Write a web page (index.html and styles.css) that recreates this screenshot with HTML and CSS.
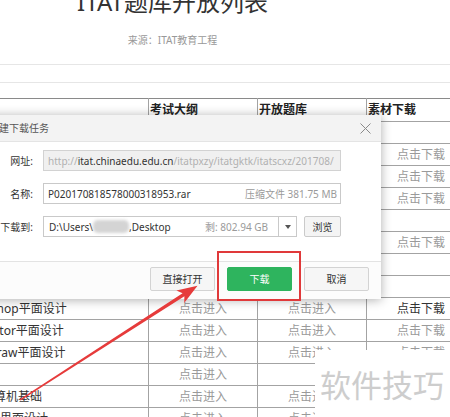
FILE: index.html
```html
<!DOCTYPE html>
<html lang="zh-CN">
<head>
<meta charset="utf-8">
<title>ITAT题库开放列表</title>
<link rel="stylesheet" href="styles.css">
</head>
<body>
<div class="viewport">
  <div class="page">
    <h1 class="title">ITAT题库开放列表</h1>
    <p class="source">来源：ITAT教育工程</p>
    <div class="sharebar"></div>
    <table class="list">
      <colgroup><col class="c1"><col class="c2"><col class="c3"><col class="c4"></colgroup>
      <thead>
        <tr><th></th><th>考试大纲</th><th>开放题库</th><th>素材下载</th></tr>
      </thead>
      <tbody>
        <tr><td class="name">ITAT平台认证</td><td>点击进入</td><td>点击进入</td><td></td></tr>
        <tr><td class="name">Flash动画设计</td><td>点击进入</td><td>点击进入</td><td>点击下载</td></tr>
        <tr><td class="name">Dreamweaver网页设计</td><td>点击进入</td><td>点击进入</td><td>点击下载</td></tr>
        <tr><td class="name">Fireworks网页设计</td><td>点击进入</td><td>点击进入</td><td>点击下载</td></tr>
        <tr><td class="name">Office办公应用</td><td>点击进入</td><td>点击进入</td><td></td></tr>
        <tr><td class="name">3ds Max三维设计</td><td>点击进入</td><td>点击进入</td><td>点击下载</td></tr>
        <tr><td class="name">AutoCAD工程制图</td><td>点击进入</td><td>点击进入</td><td></td></tr>
        <tr><td class="name">Java程序设计</td><td>点击进入</td><td>点击进入</td><td></td></tr>
        <tr><td class="name">Photoshop平面设计</td><td>点击进入</td><td>点击进入</td><td class="dark">点击下载</td></tr>
        <tr><td class="name">Illustrator平面设计</td><td>点击进入</td><td>点击进入</td><td>点击下载</td></tr>
        <tr><td class="name">CorelDraw平面设计</td><td>点击进入</td><td>点击进入</td><td>点击下载</td></tr>
        <tr><td class="name"></td><td>点击进入</td><td></td><td></td></tr>
        <tr><td class="name">计算机基础</td><td>点击进入</td><td>点击进入</td><td>点击下载</td></tr>
        <tr><td class="name">网页界面设计</td><td>点击进入</td><td>点击进入</td><td>点击下载</td></tr>
      </tbody>
    </table>
  </div>

  <div class="dialog">
    <div class="dlg-head">
      <span class="dlg-title">新建下载任务</span>
      <svg class="close" width="11" height="11" viewBox="0 0 11 11"><path d="M0.5 0.5 L10.5 10.5 M10.5 0.5 L0.5 10.5" stroke="#8a8a8a" stroke-width="1" fill="none"/></svg>
    </div>
    <div class="dlg-body">
      <label class="lbl">网址:</label>
      <div class="field disabled"><span>http://</span><span class="host">itat.chinaedu.edu.cn</span><span>/itatpxzy/itatgktk/itatscxz/201708/</span></div>
      <label class="lbl">名称:</label>
      <div class="field"><span>P020170818578000318953.rar</span><span class="meta">压缩文件 381.75 MB</span></div>
      <label class="lbl">下载到:</label>
      <div class="path-row">
        <div class="combo">
          <div class="path"><span>D:\Users\</span><span class="blur"></span><span>,Desktop</span><span class="meta">剩: 802.94 GB</span></div>
          <div class="drop"><span class="caret"></span></div>
        </div>
        <button class="btn browse">浏览</button>
      </div>
    </div>
    <div class="dlg-foot">
      <button class="btn">直接打开</button>
      <button class="btn primary">下载</button>
      <button class="btn">取消</button>
    </div>
  </div>

  <div class="highlight"></div>

  <svg class="arrow" width="450" height="417" viewBox="0 0 450 417">
    <polygon fill="#e63b3b" points="19.4,399.4 182.6,293.2 176.4,290.6 197.5,285.8 184.2,303.0 184.4,296.2 20.6,400.6"/>
  </svg>

  <div class="watermark">软件技巧</div>
</div>
</body>
</html>
```

FILE: styles.css
```css
* { box-sizing: border-box; }

body {
  margin: 0;
  background: #fff;
  font-family: "Noto Sans", "Noto Sans CJK SC", sans-serif;
  overflow: hidden;
}

.viewport {
  position: relative;
  width: 450px;
  height: 417px;
  overflow: hidden;
}

.page {
  width: 600px;
  margin-left: -125px;
  display: flow-root;
}

.title {
  margin: -13px 0 0;
  font-size: 24px;
  font-weight: 400;
  line-height: 30px;
  text-align: center;
  color: #333;
  padding-right: 5px;
}

.source {
  margin: 16px 0 0;
  font-size: 10px;
  line-height: 14px;
  color: #999;
  text-align: center;
  padding-right: 5px;
}

.sharebar {
  margin-top: 17px;
  height: 19px;
  border-top: 1px solid #e6e6e6;
  border-bottom: 1px solid #e6e6e6;
}

.list {
  margin-top: 15px;
  width: 600px;
  table-layout: fixed;
  border-collapse: collapse;
  font-size: 12px;
  line-height: 14px;
}

.c1 { width: 273px; }
.c2, .c3, .c4 { width: 109px; }

.list th,
.list td {
  border: 1px solid #a3a3a3;
  padding: 0;
  white-space: nowrap;
  overflow: hidden;
}

.list thead th {
  height: 23px;
  border-top-color: #8a8a8a;
  text-align: left;
  font-weight: 700;
  color: #222;
  padding-left: 1px;
}

.list tbody td {
  height: 22px;
  text-align: center;
  color: #9a9a9a;
}

.list tbody td.name { color: #333; }
.list tbody td.dark { color: #333; }

/* dialog */
.dialog {
  position: absolute;
  left: -22px;
  top: 115px;
  width: 403px;
  background: #fff;
  box-shadow: 0 1px 10px rgba(0, 0, 0, 0.32);
  font-size: 10px;
  line-height: 14px;
  color: #333;
}

.dlg-head {
  height: 27px;
  background: #f3f3f3;
  border-bottom: 1px solid #e4e4e4;
  display: flex;
  align-items: center;
  justify-content: space-between;
  padding: 0 10px 0 11px;
  color: #555;
}

.close { display: block; }

.dlg-body {
  display: grid;
  grid-template-columns: 55px 298px;
  column-gap: 10px;
  row-gap: 12px;
  align-items: center;
  padding: 8px 40px 24px 0;
}

.lbl {
  text-align: right;
  color: #333;
}

.field {
  height: 21px;
  border: 1px solid #c9c9c9;
  display: flex;
  align-items: center;
  padding: 0 3px 0 4px;
  white-space: nowrap;
  overflow: hidden;
}

.field.disabled {
  background: #f0f0f0;
  border-color: #d2d2d2;
  color: #b0b0b0;
}

.field .host { color: #333; }

.meta {
  margin-left: auto;
  color: #9a9a9a;
  padding-left: 8px;
}

.path-row {
  display: flex;
  gap: 7px;
}

.combo {
  width: 254px;
  height: 21px;
  border: 1px solid #c9c9c9;
  display: flex;
}

.path {
  flex: 1;
  display: flex;
  align-items: center;
  padding: 0 10px 0 5px;
  white-space: nowrap;
  overflow: hidden;
}

.blur {
  display: inline-block;
  width: 36px;
  height: 13px;
  background: #d4d4d4;
  border-radius: 5px;
  filter: blur(1.5px);
}

.drop {
  width: 18px;
  border-left: 1px solid #c9c9c9;
  display: flex;
  align-items: center;
  justify-content: center;
}

.caret {
  width: 0;
  height: 0;
  border-left: 3px solid transparent;
  border-right: 3px solid transparent;
  border-top: 4px solid #555;
}

.btn {
  font-family: inherit;
  font-size: 10px;
  line-height: 14px;
  color: #333;
  background: #f6f6f6;
  border: 1px solid #d3d3d3;
  border-radius: 2px;
  padding: 0;
  margin: 0;
  width: 65px;
  height: 24px;
}

.browse {
  flex: 1;
  width: auto;
  height: 21px;
  border-color: #cacaca;
  background: #f4f4f4;
}

.dlg-foot {
  border-top: 1px solid #e3e3e3;
  padding: 5px 12px 8px;
  display: flex;
  justify-content: flex-end;
  gap: 12px;
  background: #fcfcfc;
}

.btn.primary {
  background: #2eb45e;
  border-color: #2eb45e;
  color: #fff;
}

/* annotations */
.highlight {
  position: absolute;
  left: 217px;
  top: 251px;
  width: 84px;
  height: 50px;
  border: 2px solid #e0393a;
}

.arrow {
  position: absolute;
  left: 0;
  top: 0;
  pointer-events: none;
}

.watermark {
  position: absolute;
  left: 315px;
  top: 350px;
  width: 135px;
  height: 67px;
  background: #fff;
  font-family: "Noto Sans CJK SC", sans-serif;
  font-size: 31px;
  line-height: 34px;
  padding: 17px 0 0 5px;
  color: #cdcdcd;
  white-space: nowrap;
}
```
